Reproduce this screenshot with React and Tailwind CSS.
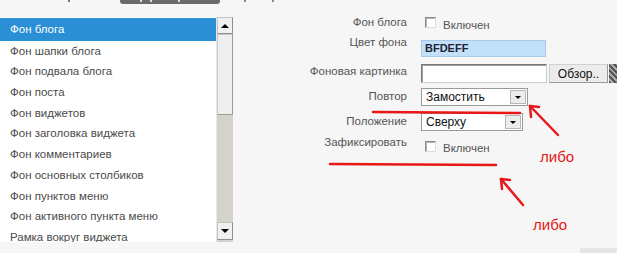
const items = [
  "Фон блога",
  "Фон шапки блога",
  "Фон подвала блога",
  "Фон поста",
  "Фон виджетов",
  "Фон заголовка виджета",
  "Фон комментариев",
  "Фон основных столбиков",
  "Фон пунктов меню",
  "Фон активного пункта меню",
  "Рамка вокруг виджета",
];

const font = { fontFamily: "'Liberation Sans', Arial, sans-serif" };

function Checkbox() {
  return (
    <span className="inline-block w-[11px] h-[11px] border border-[#8a8a8a] border-r-[#dcdcdc] border-b-[#dcdcdc] bg-white shadow-[inset_1px_1px_0_#b5b5b5]" />
  );
}

function Select({ value, width }) {
  return (
    <div className={`flex items-center h-[18px] bg-white border border-[#9a9a9a] ${width}`}>
      <span className="flex-1 pl-[4px] text-[12px] text-[#111] leading-none">{value}</span>
      <span className="flex items-center justify-center w-[16px] h-[14px] mr-[1px] bg-[#ececec] border border-[#b8b8b8]">
        <span className="block w-0 h-0 border-l-[3px] border-r-[3px] border-t-[3px] border-l-transparent border-r-transparent border-t-black" />
      </span>
    </div>
  );
}

function Row({ label, children, h, mt, labelPad = "" }) {
  return (
    <div className={`flex ${mt}`} style={{ height: h }}>
      <div className={`w-[188px] text-right text-[11.5px] leading-[13px] text-[#555] pr-[14px] whitespace-nowrap ${labelPad}`}>
        {label}
      </div>
      <div className="flex items-start">{children}</div>
    </div>
  );
}

export default function App() {
  return (
    <div className="relative w-[617px] h-[253px] overflow-hidden bg-[#f6f6f6]" style={font}>
      {/* clipped tabs strip */}
      <div className="relative h-[17px]">
        <div className="absolute left-[120px] top-0 w-[100px] h-[4px] bg-[#6b6b6b] rounded-b-[3px]" />
        <div className="absolute left-[68px] top-0 w-[2px] h-[2px] bg-[#777]" />
        <div className="absolute left-[140px] top-0 w-[2px] h-[2px] bg-[#ddd]" />
        <div className="absolute left-[150px] top-0 w-[2px] h-[2px] bg-[#ddd]" />
        <div className="absolute left-[178px] top-0 w-[2px] h-[2px] bg-[#ddd]" />
        <div className="absolute left-[244px] top-0 w-[2px] h-[2px] bg-[#888]" />
        <div className="absolute left-[272px] top-0 w-[2px] h-[2px] bg-[#888]" />
      </div>

      <div className="flex">
        {/* list box */}
        <div className="flex h-[225px] w-[233px]">
          <div className="w-[216px] bg-white pt-[1px] overflow-hidden">
            {items.map((it, i) => (
              <div
                key={it}
                className={`flex items-center pl-[10px] text-[11.5px] whitespace-nowrap ${
                  i === 0 ? "h-[23px] bg-[#2a8fd4] text-white" : "h-[20.7px] text-[#4a4a4a]"
                }`}
              >
                {it}
              </div>
            ))}
          </div>
          <div className="w-[17px] flex flex-col bg-[#d5d2cb] border-l border-[#e8e8e8]">
            <div className="h-[17px] flex items-center justify-center bg-[#f0f0f0] border border-[#c4c4c4] border-r-[#8f8f8f] border-b-[#8f8f8f]">
              <span className="block w-0 h-0 border-l-[4px] border-r-[4px] border-b-[4px] border-l-transparent border-r-transparent border-b-black" />
            </div>
            <div className="h-[81px] bg-[#efefef] border border-[#c9c9c9] border-r-[#9a9a9a] border-b-[#9a9a9a]" />
            <div className="flex-1" />
            <div className="h-[18px] mb-[2px] flex items-center justify-center bg-[#f0f0f0] border border-[#c4c4c4] border-r-[#8f8f8f] border-b-[#8f8f8f]">
              <span className="block w-0 h-0 border-l-[4px] border-r-[4px] border-t-[4px] border-l-transparent border-r-transparent border-t-black" />
            </div>
          </div>
        </div>

        {/* form */}
        <div className="flex flex-col">
          <Row label="Фон блога" h="18px" mt="-mt-[1px]">
            <div className="flex items-start gap-[7px] mt-[1px] ml-[4px]">
              <Checkbox />
              <span className="text-[11.5px] leading-[13px] text-[#555] mt-[2px]">Включен</span>
            </div>
          </Row>
          <Row label="Цвет фона" h="28px" mt="mt-[2px]">
            <div className="mt-[4px] w-[125px] h-[17px] bg-[#c3e0fb] border border-[#a9c9ea] flex items-center pl-[3px] text-[11px] font-bold text-[#223]">
              BFDEFF
            </div>
          </Row>
          <Row label="Фоновая картинка" h="24px" mt="mt-0" labelPad="pt-[1px]">
            <div className="flex items-center">
              <div className="w-[126px] h-[19px] bg-white border border-[#777] border-r-[#ccc] border-b-[#ccc] shadow-[inset_1px_1px_0_#a0a0a0]" />
              <div className="ml-[2px] w-[59px] h-[19px] bg-[#ececec] border border-[#d0d0d0] border-r-[#999] border-b-[#999] flex items-center justify-center text-[12px] text-[#111]">
                Обзор..
              </div>
              <div className="ml-[1px] w-[10px] h-[19px] bg-[repeating-linear-gradient(45deg,#555_0_2px,#aaa_2px_4px)]" />
            </div>
          </Row>
          <Row label="Повтор" h="25px" mt="mt-0" labelPad="pt-[2px]">
            <Select value="Замостить" width="w-[107px]" />
          </Row>
          <Row label="Положение" h="23px" mt="mt-0" labelPad="pt-[2px]">
            <Select value="Сверху" width="w-[102px]" />
          </Row>
          <Row label="Зафиксировать" h="20px" mt="mt-0">
            <div className="flex items-start gap-[7px] mt-[5px] ml-[4px]">
              <Checkbox />
              <span className="text-[11.5px] leading-[13px] text-[#555] mt-[1px]">Включен</span>
            </div>
          </Row>
        </div>
      </div>

      {/* bottom right fragment */}
      <div className="absolute left-[580px] top-[248px] w-[40px] h-[6px] bg-[#e6e6e6]" />

      {/* red annotations */}
      <svg className="absolute inset-0" width="617" height="253" viewBox="0 0 617 253">
        <g stroke="#e81818" strokeWidth="2.5" strokeLinecap="round" fill="none">
          <line x1="373" y1="112" x2="520" y2="113" />
          <line x1="558" y1="135" x2="530" y2="106" />
          <line x1="530" y1="106" x2="539" y2="107" />
          <line x1="530" y1="106" x2="531" y2="117" />
          <line x1="330" y1="164" x2="496" y2="165" />
          <line x1="523" y1="205" x2="501" y2="179" />
          <line x1="501" y1="179" x2="510" y2="180" />
          <line x1="501" y1="179" x2="502" y2="189" />
        </g>
      </svg>
      <div className="absolute left-[540px] top-[146px] text-[15px] text-[#e81818]">
        либо
      </div>
      <div className="absolute left-[533px] top-[214px] text-[15px] text-[#e81818]">
        либо
      </div>
    </div>
  );
}
